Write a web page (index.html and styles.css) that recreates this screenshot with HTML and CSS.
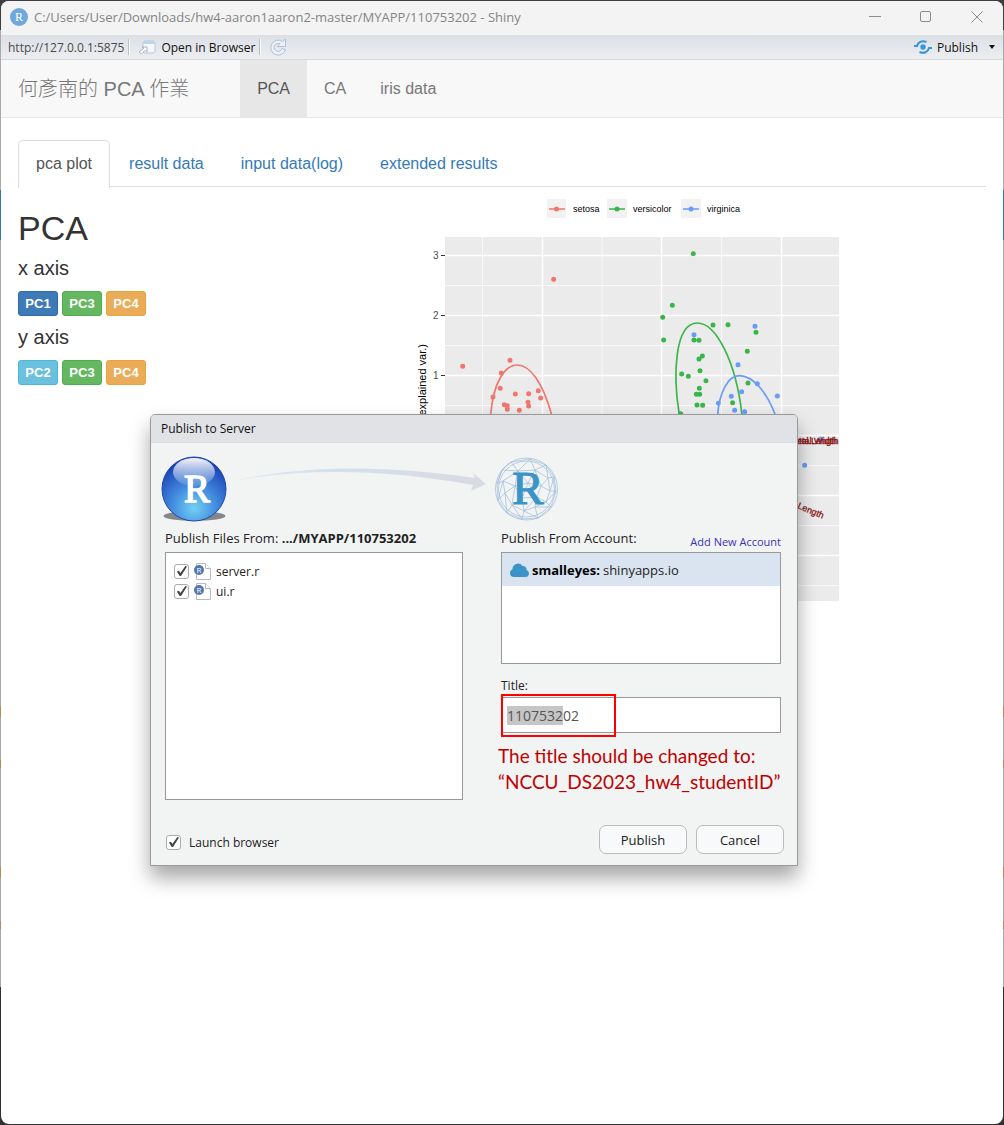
FILE: index.html
```html
<!DOCTYPE html>
<html lang="zh-Hant">
<head>
<meta charset="utf-8">
<title>Shiny</title>
<link rel="stylesheet" href="styles.css">
</head>
<body>
<div class="window">
  <header class="titlebar">
    <svg class="app-icon" width="18" height="18" viewBox="0 0 18 18"><circle cx="9" cy="9" r="9" fill="#6fa8dc"/><text x="9" y="13" text-anchor="middle" class="serif" font-size="12" fill="#fff">R</text></svg>
    <span class="window-title">C:/Users/User/Downloads/hw4-aaron1aaron2-master/MYAPP/110753202 - Shiny</span>
    <div class="window-controls">
      <button aria-label="Minimize"><svg width="12" height="12" viewBox="0 0 12 12"><path d="M0 5.500H12"/></svg></button>
      <button aria-label="Maximize"><svg width="12" height="12" viewBox="0 0 12 12"><rect x=".5" y=".5" width="10" height="10" rx="1.500"/></svg></button>
      <button aria-label="Close"><svg width="12" height="12" viewBox="0 0 12 12"><path d="M.5.5l11 11M11.500.5l-11 11"/></svg></button>
    </div>
  </header>
  <div class="toolbar">
    <span class="address">http://127.0.0.1:5875</span>
    <i class="separator"></i>
    <button class="tool open-browser"><svg width="18" height="15" viewBox="0 0 18 15"><rect x="5" y="1" width="12" height="12" rx="2" fill="#f4f8fc" stroke="#b9c9da"/><path d="M5 3q0-2 2-2h8q2 0 2 2v1H5z" fill="#bfd5ec"/><path d="M1 12l5-4-2-1h5v5l-1.500-2-4 4z" fill="#fff" stroke="#aab4be"/></svg>Open in Browser</button>
    <i class="separator"></i>
    <button class="tool" aria-label="Reload"><svg width="18" height="18" viewBox="0 0 18 18" fill="none"><path d="M13.500 3.500A7.500 7.500 0 1 0 16.500 11.500L13 10.500A4 4 0 1 1 11 5.800L8.500 8.500H16.500V1z" fill="#e9f1fa" stroke="#b3bfd2"/></svg></button>
    <button class="tool publish-tool"><svg width="18" height="14" viewBox="0 0 18 14" fill="none" stroke="#3496dc" stroke-width="2"><circle cx="9" cy="7" r="2.700" fill="#3496dc" stroke="none"/><path d="M0 6h3C4 2 8 0 12.500 2M18 8h-3C14 12 10 14 5.500 12"/></svg>Publish<svg class="caret" width="6" height="4" viewBox="0 0 6 4"><path d="M0 0h6L3 4z" fill="#111"/></svg></button>
  </div>
  <nav class="navbar">
    <a class="brand" href="#">何彥南的 PCA 作業</a>
    <a class="nav-link active" href="#">PCA</a>
    <a class="nav-link" href="#">CA</a>
    <a class="nav-link" href="#">iris data</a>
  </nav>
  <main class="content">
    <div class="tabs">
      <a class="tab active" href="#">pca plot</a>
      <a class="tab" href="#">result data</a>
      <a class="tab" href="#">input data(log)</a>
      <a class="tab" href="#">extended results</a>
    </div>
    <div class="panel">
      <section class="axes">
        <h1>PCA</h1>
        <h2>x axis</h2>
        <div class="choices"><button class="primary">PC1</button><button class="success">PC3</button><button class="warning">PC4</button></div>
        <h2>y axis</h2>
        <div class="choices"><button class="info">PC2</button><button class="success">PC3</button><button class="warning">PC4</button></div>
      </section>
      <svg class="plot" width="424" height="406" viewBox="415 195 424 406">
        <path d="M445 237h394v364H445z" fill="#ebebeb"/>
        <g stroke="#fff"><path d="M445 285.500h394M445 345.500h394M445 405.500h394M445 465.500h394M445 525.500h394M445 585.500h394M482.500 237v364M602 237v364M721.500 237v364" stroke-width=".7"/><path d="M445 255.500h394M445 315.500h394M445 375.500h394M445 435.500h394M445 495.500h394M445 555.500h394M542.500 237v364M661.500 237v364M781.500 237v364" stroke-width="1.500"/></g>
        <path d="M441 255.500h4M441 315.500h4M441 375.500h4" stroke="#333"/>
        <g font-size="10" fill="#4d4d4d"><text x="433" y="259">3</text><text x="433" y="319">2</text><text x="433" y="379">1</text></g>
        <text transform="translate(426 344) rotate(-90)" text-anchor="end" font-size="11">explained var.)</text>
        <path d="M547 199h19v19h-19zM607 199h20v19h-20zM681 199h20v19h-20z" fill="#f2f2f2"/>
        <g stroke-width="1.300"><path d="M549 209h16" stroke="#f0766e"/><path d="M609 209h16" stroke="#39b54a"/><path d="M683 209h16" stroke="#6a9bfb"/></g>
        <circle cx="556.500" cy="209" r="2.500" fill="#f0766e"/><circle cx="617" cy="209" r="2.500" fill="#39b54a"/><circle cx="691" cy="209" r="2.500" fill="#6a9bfb"/>
        <g font-size="9"><text x="573" y="212">setosa</text><text x="633" y="212">versicolor</text><text x="707" y="212">virginica</text></g>
        <g transform="translate(410 195) scale(.3333)">
          <path d="M242 660C250 560 285 510 322 510s76 50 103 150" fill="none" stroke="#f0766e" stroke-width="5"/>
          <path d="M431 253h0M158 514h0M300 496h0M274 534h0M271 580h0M249 606h0M316 597h0M356 596h0M385 587h0M392 609h0M354 622h0M356 633h0M283 629h0M292 632h0M292 643h0M328 646h0" class="dots" stroke="#f0766e"/>
        </g>
        <g transform="translate(630 195) scale(.3333)">
          <path d="M148 660C128 540 134 384 202 384c56 0 116 116 134 276" fill="none" stroke="#39b54a" stroke-width="5"/>
          <path d="M263 660C268 590 295 542 328 542c40 0 82 48 108 118" fill="none" stroke="#6a9bfb" stroke-width="5"/>
          <path d="M190 176h0M127 331h0M98 367h0M101 435h0M249 390h0M294 389h0M378 412h0M192 435h0M207 436h0M352 469h0M217 483h0M207 492h0M210 527h0M155 537h0M175 544h0M228 557h0M208 580h0M199 598h0M209 598h0M201 630h0M218 631h0M354 564h0M308 623h0M152 656h0" class="dots" stroke="#39b54a"/>
          <path d="M375 394h0M192 419h0M324 509h0M382 566h0M335 590h0M304 604h0M442 603h0M265 625h0M314 646h0M344 650h0M572 732h0M524 811h0" class="dots" stroke="#6a9bfb"/>
        </g>
        <g font-size="9" fill="#8b1a1a" stroke="#8b1a1a" stroke-width=".3"><text x="788" y="444">Petal.Length</text><text x="791" y="444">Petal.Width</text><text transform="translate(797 508) rotate(23)">Length</text></g>
      </svg>
    </div>
  </main>
</div>
<form class="dialog" onsubmit="return false">
  <h3 class="dialog-title">Publish to Server</h3>
  <div class="route">
    <svg width="398" height="66" viewBox="161 456 398 66">
      <defs>
        <radialGradient id="ball" cx=".5" cy=".8" r=".75"><stop offset="0" stop-color="#72d0f4"/><stop offset=".5" stop-color="#3f86dc"/><stop offset="1" stop-color="#1a3fb4"/></radialGradient>
        <linearGradient id="gloss" x2="0" y2="1"><stop offset="0" stop-color="#fff" stop-opacity=".95"/><stop offset="1" stop-color="#fff" stop-opacity=".1"/></linearGradient>
        <linearGradient id="swoosh"><stop offset="0" stop-color="#dfe8f2"/><stop offset=".4" stop-color="#d3e0ee"/><stop offset="1" stop-color="#d8dbe0"/></linearGradient>
      </defs>
      <ellipse cx="194.500" cy="516" rx="31" ry="5" fill="#85878a"/>
      <circle cx="194" cy="489" r="32" fill="url(#ball)" stroke="#1f47ae"/>
      <ellipse cx="194" cy="472" rx="21" ry="14" fill="url(#gloss)"/>
      <text x="197" y="502" text-anchor="middle" class="serif" font-size="39" fill="#fff" stroke="#fff" stroke-width="1.400">R</text>
      <path d="M232 481C310 464 390 466 475 478L473 473L486 484L471 491L473 485C390 470 310 467 232 481z" fill="url(#swoosh)"/>
      <g fill="none" stroke="#9dbada" stroke-width=".7">
        <circle cx="526.500" cy="489" r="31"/><circle cx="526.500" cy="489" r="28"/>
        <path d="M511 462L530 459L546 465L554 477L556 491L551 507L538 518L522 519L507 513L498 500L497 484L502 470zM511 462L518 471L530 459L535 470L546 465L548 478L554 477L550 491L556 491L546 502L551 507L535 507L538 518L524 511L522 519L512 505L507 513L505 493L498 500L503 481L497 484L502 470L518 471L535 470L548 478L550 491L546 502L535 507L524 511L512 505L505 493L503 481L518 471L515 486L503 481M515 486L505 493M515 486L528 483L518 471M528 483L535 470M528 483L541 486L535 470M541 486L548 478M541 486L550 491M541 486L537 497L546 502M537 497L535 507M537 497L528 483M537 497L522 498L515 486M522 498L528 483M522 498L512 505L515 486M522 498L524 511L537 497"/>
      </g>
      <text x="528" y="504" text-anchor="middle" class="serif" font-size="47" fill="#3a94c8" stroke="#3a94c8" stroke-width="1.200">R</text>
    </svg>
  </div>
  <div class="columns">
    <section class="files">
      <p class="label">Publish Files From: <b>.../MYAPP/110753202</b></p>
      <div class="list">
        <label class="file"><input type="checkbox" checked><svg width="17" height="17" viewBox="0 0 17 17"><path d="M2.500.5h9l5 5v11h-14z" fill="#fff" stroke="#b5bac0"/><path d="M11.500.5v5h5" fill="#fff" stroke="#b5bac0"/><circle cx="5" cy="7" r="5" fill="#5377aa"/><text x="5" y="10" text-anchor="middle" font-size="8" fill="#fff">R</text></svg>server.r</label>
        <label class="file"><input type="checkbox" checked><svg width="17" height="17" viewBox="0 0 17 17"><path d="M2.500.5h9l5 5v11h-14z" fill="#fff" stroke="#b5bac0"/><path d="M11.500.5v5h5" fill="#fff" stroke="#b5bac0"/><circle cx="5" cy="7" r="5" fill="#5377aa"/><text x="5" y="10" text-anchor="middle" font-size="8" fill="#fff">R</text></svg>ui.r</label>
      </div>
    </section>
    <section class="target">
      <div class="label account-label"><span>Publish From Account:</span><a href="#">Add New Account</a></div>
      <div class="accounts">
        <div class="account"><svg width="19" height="14" viewBox="0 0 19 14"><path d="M4 14a4 4 0 0 1-1.500-7.700A5.500 5.500 0 0 1 12.500 3a3.500 3.500 0 0 1 4 4A3.600 3.600 0 0 1 15.500 14z" fill="#3a94c8"/></svg><b>smalleyes:</b> shinyapps.io</div>
      </div>
      <label class="title-label" for="title">Title:</label>
      <div class="title-field"><input id="title" type="text" value="110753202"><i class="highlight"></i></div>
      <p class="note">The title should be changed to:<br>“NCCU_DS2023_hw4_studentID”</p>
    </section>
  </div>
  <footer class="dialog-footer">
    <label class="launch"><input type="checkbox" checked>Launch browser</label>
    <button class="action">Publish</button>
    <button class="action">Cancel</button>
  </footer>
</form>
</body>
</html>
```
FILE: styles.css
```css
* { box-sizing: border-box; }
body {
  margin: 0;
  min-height: 100vh;
  padding: 1px;
  display: flex;
  position: relative;
  background: linear-gradient(#3f3d40 0 30px, #a9a9a9 30px 190px, #2f78a8 190px 240px, #a9a9a9 240px 706px, #b98a55 706px 717px, #a9a9a9 717px 760px, #b98a55 760px 768px, #a9a9a9 768px 867px, #b98a55 867px 878px, #a9a9a9 878px 921px, #b98a55 921px 929px, #a9a9a9 929px 987px, #303030 987px);
  font-family: "Open Sans", "Noto Sans CJK TC", sans-serif;
  font-size: 12px;
  color: #222;
}
button { font: inherit; color: inherit; border: 0; background: none; padding: 0; }
svg { flex: none; display: block; }
h1, h2, h3, p { margin: 0; font-weight: 400; }
.serif { font-family: "Liberation Serif", serif; }

.window { flex: 1; background: #fff; border-radius: 8px; overflow: hidden; }
.titlebar { display: flex; align-items: center; height: 34px; padding: 0 1px 2px 9px; background: #f3f3f3; color: #858585; }
.window-title { margin-left: 6px; font-size: 13px; }
.window-controls { display: flex; margin-left: auto; }
.window-controls button { width: 51px; display: flex; justify-content: center; }
.window-controls svg { fill: none; stroke: #8c8c8c; }

.toolbar { display: flex; align-items: center; height: 25px; padding: 0 8px 0 7px; background: linear-gradient(#dcdfe4, #eceef1); border-bottom: 1px solid #d6dade; color: #111; font-size: 12px; }
.address { color: #4b4b4b; }
.separator { width: 2px; height: 16px; margin: 0 8px 0 4px; border-left: 1px solid #bcc0c6; background: #f8f8f8; }
.tool { display: flex; align-items: center; gap: 5px; }
.publish-tool { margin-left: auto; }
.caret { margin-left: 6px; }

.navbar { display: flex; align-items: center; height: 58px; padding-left: 17px; background: #f8f8f8; border-bottom: 1px solid #e7e7e7; font: 16px "Liberation Sans", "Noto Sans CJK TC", sans-serif; }
.navbar a { color: #777; text-decoration: none; }
.brand { margin-right: 51px; font-size: 20px; font-weight: 300; line-height: 56px; }
.nav-link { padding: 0 17px; line-height: 57px; }
.navbar .nav-link.active { background: #e7e7e7; color: #555; }

.content { padding: 22px 17px; font-family: "Liberation Sans", sans-serif; }
.tabs { display: flex; gap: 1px; border-bottom: 1px solid #ddd; font-size: 16px; }
.tab { padding: 0 17px; line-height: 46px; margin-bottom: -2px; border: 1px solid transparent; border-radius: 5px 5px 0 0; color: #337ab7; text-decoration: none; }
.tab.active { color: #555; background: #fff; border-color: #ddd; border-bottom: 0; }
.panel { display: flex; justify-content: space-between; padding: 8px 147px 0 0; }
.axes { padding-top: 12px; color: #333; }
.axes h1 { font-size: 34px; line-height: 42px; margin-bottom: 7px; }
.axes h2 { font-size: 20px; line-height: 24px; margin-bottom: 11px; }
.choices { display: flex; gap: 4px; margin-bottom: 9px; }
.choices button { width: 40px; height: 25px; border: 1px solid; border-radius: 3px; color: #fff; font-size: 13px; font-weight: 700; }
.choices .primary { background: #3e7ab8; border-color: #2e6da4; }
.choices .success { background: #65b761; border-color: #4cae4c; }
.choices .warning { background: #eaac58; border-color: #eea236; }
.choices .info { background: #6bc0de; border-color: #46b8da; }
.plot { font-family: "Liberation Sans", sans-serif; }
.dots { fill: none; stroke-width: 15; stroke-linecap: round; }

.dialog { position: absolute; left: 150px; top: 414px; width: 648px; background: #f2f4f4; border: 1px solid #999; border-radius: 5px 5px 0 0; box-shadow: 0 12px 20px rgba(0, 0, 0, .35); }
.dialog-title { height: 28px; padding-left: 10px; font-size: 12px; line-height: 28px; background: #e0e2e6; border-bottom: 1px solid #d8dbdf; border-radius: 4px 4px 0 0; color: #111; }
.route { padding: 13px 10px 0; }
.columns { display: grid; grid-template-columns: 298px 280px; gap: 38px; padding: 7px 14px 0; }
.label { height: 23px; font-size: 13px; line-height: 18px; white-space: nowrap; }
.account-label { display: flex; justify-content: space-between; }
.account-label a { padding-top: 4px; font-size: 11px; color: #3a33b8; text-decoration: none; }
.list { height: 248px; padding: 8px; background: #fff; border: 1px solid #999; }
.file, .launch { display: flex; align-items: center; }
.file { height: 20px; font-size: 12px; gap: 5px; }
input[type="checkbox"] { appearance: none; width: 15px; height: 15px; margin: 0; border: 1px solid #aaa; border-radius: 3px; background: #fff; display: grid; place-items: center; }
input[type="checkbox"]:checked::before { content: ""; width: 11px; height: 11px; background: #444; clip-path: polygon(8% 55%, 27% 48%, 40% 68%, 85% 5%, 100% 10%, 46% 96%, 34% 96%); }
.accounts { height: 112px; background: #fff; border: 1px solid #999; }
.account { display: flex; align-items: center; gap: 3px; height: 33px; padding-left: 8px; background: #d9e4f0; font-size: 13px; }
.account b { color: #000; }
.title-label { display: block; height: 33px; padding-top: 13px; line-height: 18px; }
.title-field { position: relative; }
.title-field input { display: block; width: 100%; height: 36px; padding: 0 5px; border: 1px solid #999; font: 14px "Open Sans", sans-serif; color: #555; background: linear-gradient(#c6c6c6, #c6c6c6) 5px 8px / 56px 19px no-repeat #fff; }
.highlight { position: absolute; left: 0; top: -3px; width: 115px; height: 43px; border: 2px solid #f00; }
.note { margin: 10px 0 0 -3px; color: #c00000; font: 19px/26px Lato, sans-serif; white-space: nowrap; }
.dialog-footer { display: flex; align-items: center; gap: 9px; padding: 25px 13px 11px 15px; }
.launch { margin-right: auto; padding-top: 5px; gap: 8px; font-size: 12px; }
.action { width: 88px; height: 29px; border: 1px solid #bbb; border-radius: 7px; background: #f8f9fa; font-size: 13px; }
```
